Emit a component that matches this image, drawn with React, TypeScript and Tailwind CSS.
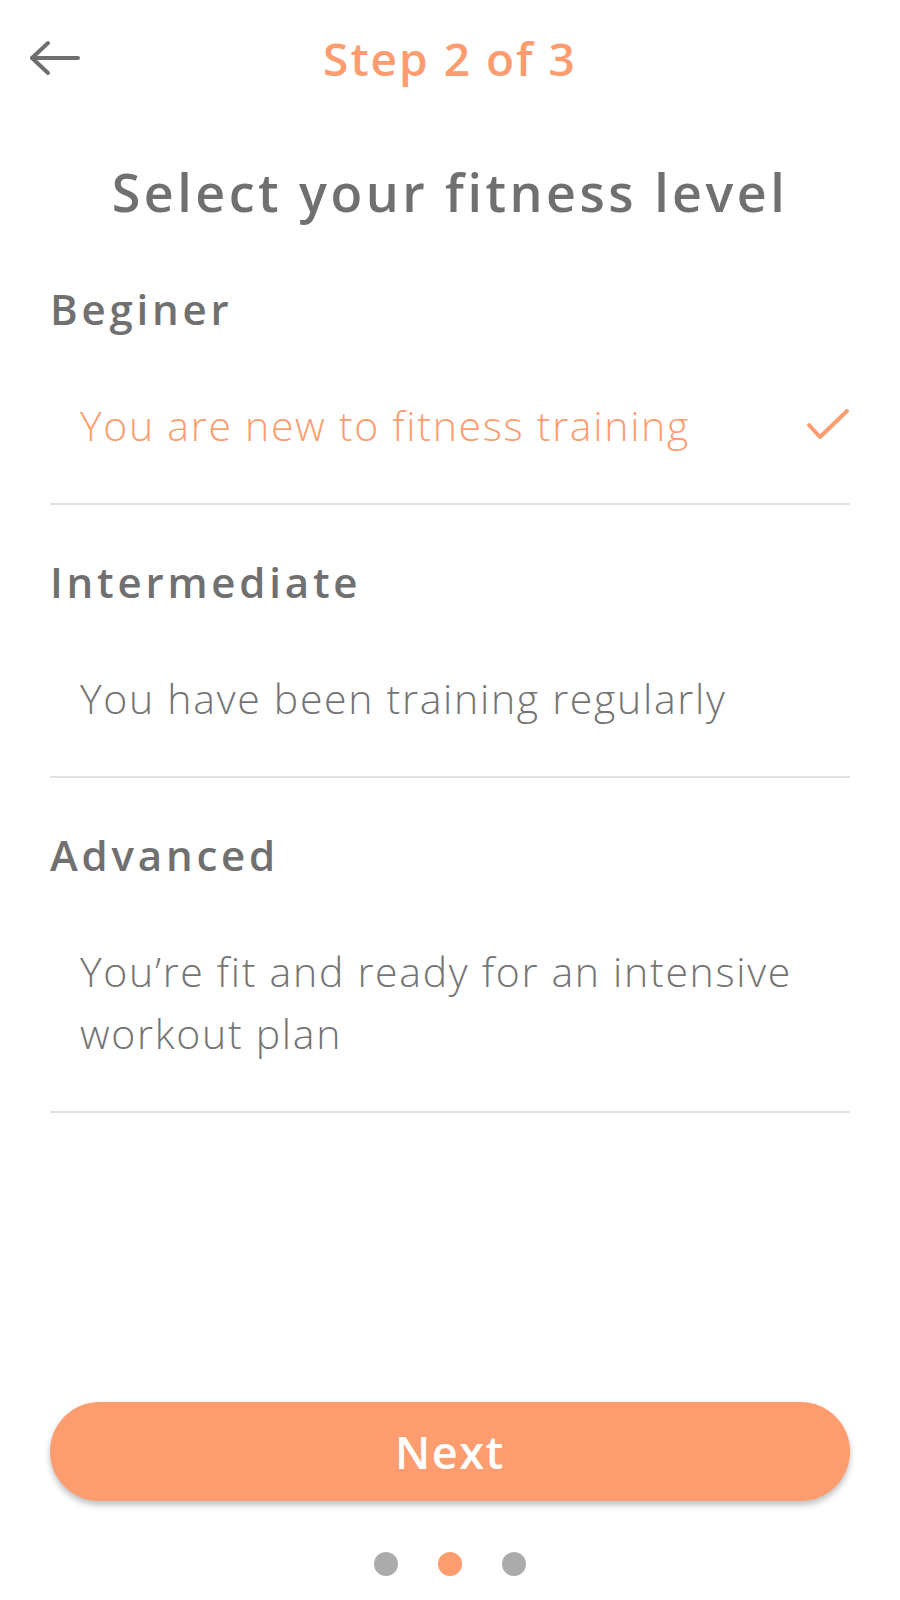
import { useState } from 'react';

const LEVELS = [
    { id: 'beginner', title: 'Beginer', description: 'You are new to fitness training' },
    { id: 'intermediate', title: 'Intermediate', description: 'You have been training regularly' },
    { id: 'advanced', title: 'Advanced', description: "You\u2019re fit and ready for an intensive workout plan" },
];

function BackArrow() {
    return (
        <svg width="52" height="36" viewBox="0 0 52 36" fill="none" stroke="#6f6f6f" strokeWidth="4" strokeLinecap="round" strokeLinejoin="round">
            <path d="M3 18 H49" />
            <path d="M19 3 L3 18 L19 33" />
        </svg>
    );
}

function Check() {
    return (
        <svg width="44" height="34" viewBox="0 0 44 34" fill="none" stroke="#fd9d6f" strokeWidth="4" strokeLinecap="round" strokeLinejoin="round">
            <path d="M3 17 L14 29 L41 3" />
        </svg>
    );
}

export default function App() {
    const [selected, setSelected] = useState('beginner');

    return (
        <div className="flex flex-col h-[1600px] bg-white font-['Open_Sans',sans-serif] text-[#707070]">
            <div className="grid grid-cols-[1fr_auto_1fr] items-center h-[116px] px-[29px]">
                <button className="justify-self-start">
                    <BackArrow />
                </button>
                <h1 className="text-[46px] font-semibold text-[#fd9d6f] tracking-[2px]">Step 2 of 3</h1>
                <div />
            </div>

            <h2 className="mt-[44px] text-center text-[52px] leading-[64px] font-semibold tracking-[3.5px]">
                Select your fitness level
            </h2>

            <div className="mt-[8px] px-[50px]">
                {LEVELS.map(level => {
                    const active = selected === level.id;
                    return (
                        <button key={level.id} onClick={() => setSelected(level.id)} className="block w-full text-left">
                            <div className="mt-[49px] text-[42px] leading-[56px] font-semibold tracking-[3.8px]">{level.title}</div>
                            <div className="mt-[57px] flex items-center justify-between pl-[30px]">
                                <p className={`text-[41px] leading-[62px] font-light tracking-[1.7px] max-w-[730px] ${active ? 'text-[#fd9d6f]' : 'text-[#747474]'}`}>
                                    {level.description}
                                </p>
                                {active && <Check />}
                            </div>
                            <div className="mt-[47px] h-[2px] bg-[#e0e0e0]" />
                        </button>
                    );
                })}
            </div>

            <div className="mt-auto px-[50px]">
                <button className="w-full h-[99px] rounded-full bg-[#fd9d6f] text-white text-[45px] font-semibold tracking-[1.5px] shadow-[0_4px_6px_rgba(0,0,0,0.25)]">
                    Next
                </button>
            </div>

            <div className="flex justify-center gap-[40px] mt-[51px] pb-[24px]">
                <span className="w-[24px] h-[24px] rounded-full bg-[#ababab]" />
                <span className="w-[24px] h-[24px] rounded-full bg-[#fd9d6f]" />
                <span className="w-[24px] h-[24px] rounded-full bg-[#ababab]" />
            </div>
        </div>
    );
}
